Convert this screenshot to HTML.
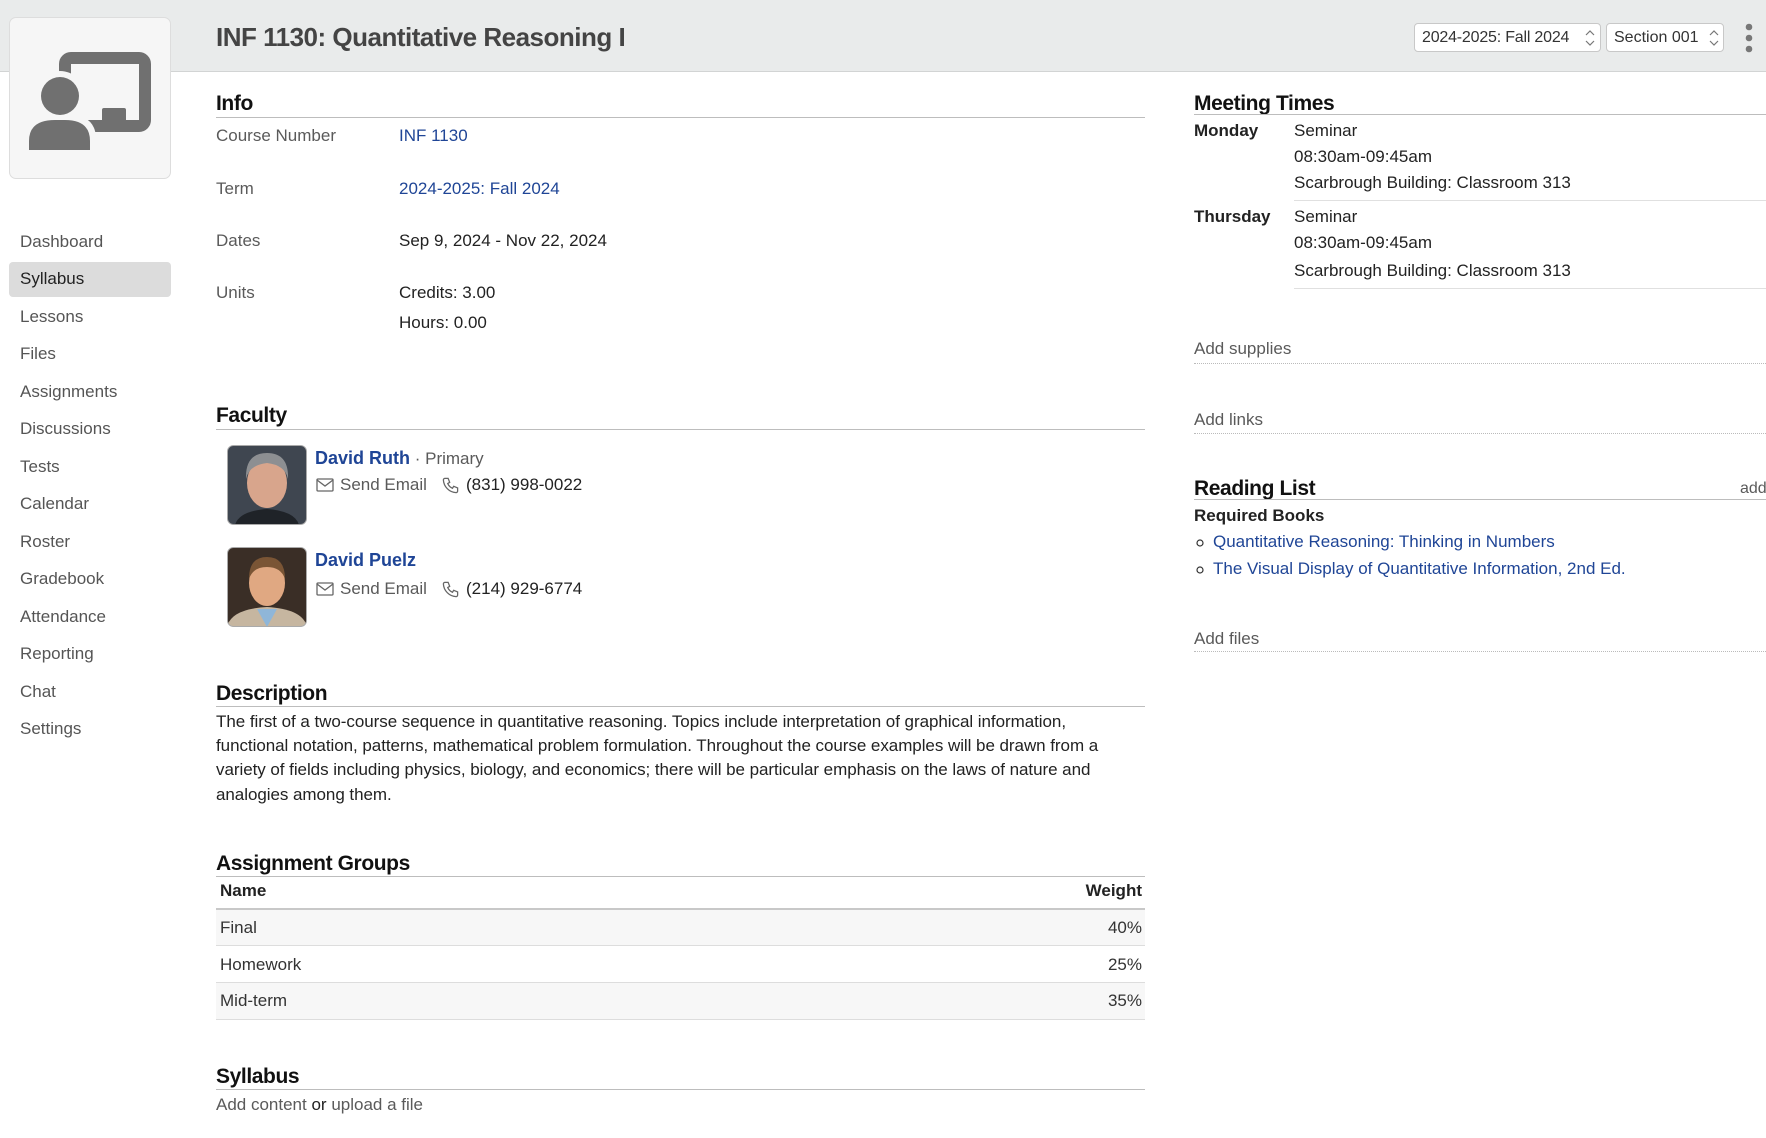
<!DOCTYPE html>
<html><head><meta charset="utf-8"><style>
*{margin:0;padding:0;box-sizing:border-box}
body{width:1766px;height:1138px;position:relative;overflow:hidden;background:#fff;font-family:"Liberation Sans",sans-serif;color:#222;font-size:17px}
.t{position:absolute;white-space:nowrap;line-height:24px;height:24px}
.g{color:#5a5a5a}
.l{color:#1f4596}
.h{position:absolute;white-space:nowrap;font-size:21px;line-height:26px;color:#111;letter-spacing:-0.4px;font-weight:bold}
.ln{position:absolute;height:1px;background:#bdbdbd}
.dl{position:absolute;height:0;border-top:1px dotted #bbb}
.nav{position:absolute;left:20px;color:#555;font-size:17px;line-height:24px;white-space:nowrap}
.b{font-weight:bold}
</style></head><body>
<div style="position:absolute;left:0;top:0;width:1766px;height:72px;background:#e9ebeb;border-bottom:1px solid #d2d4d4"></div>
<div class="t" style="left:216px;top:22px;font-size:26px;line-height:30px;height:30px;color:#444;letter-spacing:-0.5px;font-weight:bold">INF 1130: Quantitative Reasoning I</div>
<div style="position:absolute;left:1414px;top:23px;width:187px;height:29px;background:#fff;border:1px solid #c8c8c8;border-radius:4px;font-size:16px;line-height:27px;padding-left:7px;color:#333;letter-spacing:-0.2px">2024-2025: Fall 2024</div>
<div style="position:absolute;left:1606px;top:23px;width:118px;height:29px;background:#fff;border:1px solid #c8c8c8;border-radius:4px;font-size:16px;line-height:27px;padding-left:7px;color:#333">Section 001</div>
<svg style="position:absolute;left:1584px;top:29px" width="12" height="18"><path d="M2 6l4-4 4 4M2 12l4 4 4-4" fill="none" stroke="#777" stroke-width="1.2"/></svg>
<svg style="position:absolute;left:1708px;top:29px" width="12" height="18"><path d="M2 6l4-4 4 4M2 12l4 4 4-4" fill="none" stroke="#777" stroke-width="1.2"/></svg>
<svg style="position:absolute;left:1742px;top:22px" width="14" height="32"><circle cx="7" cy="5" r="3.3" fill="#777"/><circle cx="7" cy="16" r="3.3" fill="#777"/><circle cx="7" cy="27" r="3.3" fill="#777"/></svg>

<div style="position:absolute;left:9px;top:17px;width:162px;height:162px;background:#f6f6f6;border:1px solid #ddd;border-radius:7px"></div>
<svg style="position:absolute;left:9px;top:17px" width="162" height="162" viewBox="0 0 162 162">
<rect x="56" y="41" width="80" height="68" rx="6" fill="none" stroke="#707070" stroke-width="12"/>
<rect x="93" y="91" width="24" height="14" rx="2" fill="#707070"/>
<circle cx="51" cy="79" r="25" fill="#f6f6f6"/>
<path d="M14 138 V122 Q14 97 46 97 H56 Q87 97 87 122 V138 Z" fill="#f6f6f6"/>
<circle cx="51" cy="79" r="19" fill="#707070"/>
<path d="M20 133 V124 Q20 103 46 103 H56 Q81 103 81 124 V133 Z" fill="#707070"/>
</svg>

<div style="position:absolute;left:9px;top:262px;width:162px;height:35px;background:#dcdcdc;border-radius:4px"></div>
<div class="nav" style="top:230px">Dashboard</div>
<div class="nav" style="top:267px;color:#222">Syllabus</div>
<div class="nav" style="top:305px">Lessons</div>
<div class="nav" style="top:342px">Files</div>
<div class="nav" style="top:380px">Assignments</div>
<div class="nav" style="top:417px">Discussions</div>
<div class="nav" style="top:455px">Tests</div>
<div class="nav" style="top:492px">Calendar</div>
<div class="nav" style="top:530px">Roster</div>
<div class="nav" style="top:567px">Gradebook</div>
<div class="nav" style="top:605px">Attendance</div>
<div class="nav" style="top:642px">Reporting</div>
<div class="nav" style="top:680px">Chat</div>
<div class="nav" style="top:717px">Settings</div>

<!-- Info -->
<div class="h" style="left:216px;top:91px">Info</div>
<div class="ln" style="left:216px;top:117px;width:929px"></div>
<div class="t g" style="left:216px;top:124px">Course Number</div><div class="t l" style="left:399px;top:124px">INF 1130</div>
<div class="t g" style="left:216px;top:177px">Term</div><div class="t l" style="left:399px;top:177px">2024-2025: Fall 2024</div>
<div class="t g" style="left:216px;top:229px">Dates</div><div class="t" style="left:399px;top:229px">Sep 9, 2024 - Nov 22, 2024</div>
<div class="t g" style="left:216px;top:281px">Units</div><div class="t" style="left:399px;top:281px">Credits: 3.00</div>
<div class="t" style="left:399px;top:311px">Hours: 0.00</div>

<!-- Faculty -->
<div class="h" style="left:216px;top:403px">Faculty</div>
<div class="ln" style="left:216px;top:429px;width:929px"></div>
<svg style="position:absolute;left:227px;top:445px" width="80" height="80"><defs><clipPath id="c1"><rect x="0.5" y="0.5" width="79" height="79" rx="6"/></clipPath></defs><g clip-path="url(#c1)"><rect width="80" height="80" fill="#3f4650"/><path d="M8 80 Q12 66 40 64 Q68 66 72 80Z" fill="#1f2328"/><ellipse cx="40" cy="38" rx="20" ry="25" fill="#d8a58c"/><path d="M19 34 Q18 8 40 8 Q62 8 61 34 Q58 20 40 18 Q22 20 19 34Z" fill="#8d8f92"/></g><rect x="0.5" y="0.5" width="79" height="79" rx="6" fill="none" stroke="#aaa"/></svg>
<div class="t" style="left:315px;top:446px"><span class="l b" style="font-size:18px">David Ruth</span><span class="g"> · Primary</span></div>
<svg style="position:absolute;left:316px;top:478px" width="18" height="14"><rect x="1" y="1" width="16" height="12" rx="1" fill="none" stroke="#666" stroke-width="1.3"/><path d="M1 2l8 6 8-6" fill="none" stroke="#666" stroke-width="1.3"/></svg>
<div class="t g" style="left:340px;top:473px">Send Email</div>
<svg style="position:absolute;left:441px;top:476px" width="19" height="19" viewBox="0 0 24 24"><path d="M5 3h4l2 5-2.5 1.5a11 11 0 0 0 6 6L16 13l5 2v4a2 2 0 0 1-2 2A17 17 0 0 1 3 5a2 2 0 0 1 2-2" fill="none" stroke="#666" stroke-width="1.6"/></svg>
<div class="t" style="left:466px;top:473px">(831) 998-0022</div>

<svg style="position:absolute;left:227px;top:547px" width="80" height="80"><defs><clipPath id="c2"><rect x="0.5" y="0.5" width="79" height="79" rx="6"/></clipPath></defs><g clip-path="url(#c2)"><rect width="80" height="80" fill="#3a2e26"/><path d="M0 80 Q4 62 40 60 Q76 62 80 80Z" fill="#c6b6a0"/><path d="M30 62 L40 80 L50 62Z" fill="#8fb6d8"/><ellipse cx="40" cy="36" rx="18" ry="23" fill="#e0a882"/><path d="M22 32 Q22 10 40 10 Q58 10 58 32 Q54 20 40 20 Q26 20 22 32Z" fill="#7a5535"/></g><rect x="0.5" y="0.5" width="79" height="79" rx="6" fill="none" stroke="#aaa"/></svg>
<div class="t" style="left:315px;top:548px"><span class="l b" style="font-size:18px">David Puelz</span></div>
<svg style="position:absolute;left:316px;top:582px" width="18" height="14"><rect x="1" y="1" width="16" height="12" rx="1" fill="none" stroke="#666" stroke-width="1.3"/><path d="M1 2l8 6 8-6" fill="none" stroke="#666" stroke-width="1.3"/></svg>
<div class="t g" style="left:340px;top:577px">Send Email</div>
<svg style="position:absolute;left:441px;top:580px" width="19" height="19" viewBox="0 0 24 24"><path d="M5 3h4l2 5-2.5 1.5a11 11 0 0 0 6 6L16 13l5 2v4a2 2 0 0 1-2 2A17 17 0 0 1 3 5a2 2 0 0 1 2-2" fill="none" stroke="#666" stroke-width="1.6"/></svg>
<div class="t" style="left:466px;top:577px">(214) 929-6774</div>

<!-- Description -->
<div class="h" style="left:216px;top:681px">Description</div>
<div class="ln" style="left:216px;top:706px;width:929px"></div>
<div class="t" style="left:216px;top:710px;font-size:17px;letter-spacing:-0.05px">The first of a two-course sequence in quantitative reasoning. Topics include interpretation of graphical information,</div>
<div class="t" style="left:216px;top:734px;font-size:17px;letter-spacing:-0.05px">functional notation, patterns, mathematical problem formulation. Throughout the course examples will be drawn from a</div>
<div class="t" style="left:216px;top:758px;font-size:17px;letter-spacing:-0.05px">variety of fields including physics, biology, and economics; there will be particular emphasis on the laws of nature and</div>
<div class="t" style="left:216px;top:783px;font-size:17px;letter-spacing:-0.05px">analogies among them.</div>

<!-- Assignment groups -->
<div class="h" style="left:216px;top:851px">Assignment Groups</div>
<div class="ln" style="left:216px;top:876px;width:929px"></div>
<div class="t b" style="left:220px;top:879px">Name</div><div class="t b" style="right:624px;top:879px">Weight</div>
<div style="position:absolute;left:216px;top:908px;width:929px;height:2px;background:#c8c8c8"></div>
<div style="position:absolute;left:216px;top:910px;width:929px;height:36px;background:#f7f7f7;border-bottom:1px solid #ddd"></div>
<div style="position:absolute;left:216px;top:946px;width:929px;height:37px;background:#fff;border-bottom:1px solid #ddd"></div>
<div style="position:absolute;left:216px;top:983px;width:929px;height:37px;background:#f7f7f7;border-bottom:1px solid #ddd"></div>
<div class="t" style="left:220px;top:916px;color:#333">Final</div><div class="t" style="right:624px;top:916px;color:#333">40%</div>
<div class="t" style="left:220px;top:953px;color:#333">Homework</div><div class="t" style="right:624px;top:953px;color:#333">25%</div>
<div class="t" style="left:220px;top:989px;color:#333">Mid-term</div><div class="t" style="right:624px;top:989px;color:#333">35%</div>

<div class="h" style="left:216px;top:1064px">Syllabus</div>
<div class="ln" style="left:216px;top:1089px;width:929px"></div>
<div class="t" style="left:216px;top:1093px"><span class="g">Add content</span> or <span class="g">upload a file</span></div>

<!-- Right column -->
<div class="h" style="left:1194px;top:91px">Meeting Times</div>
<div class="ln" style="left:1194px;top:114px;width:572px"></div>
<div class="t b" style="left:1194px;top:119px">Monday</div>
<div class="t" style="left:1294px;top:119px">Seminar</div>
<div class="t" style="left:1294px;top:145px">08:30am-09:45am</div>
<div class="t" style="left:1294px;top:171px">Scarbrough Building: Classroom 313</div>
<div class="ln" style="left:1294px;top:200px;width:472px;background:#e0e0e0"></div>
<div class="t b" style="left:1194px;top:205px">Thursday</div>
<div class="t" style="left:1294px;top:205px">Seminar</div>
<div class="t" style="left:1294px;top:231px">08:30am-09:45am</div>
<div class="t" style="left:1294px;top:259px">Scarbrough Building: Classroom 313</div>
<div class="ln" style="left:1294px;top:288px;width:472px;background:#e0e0e0"></div>

<div class="t g" style="left:1194px;top:337px">Add supplies</div>
<div class="dl" style="left:1194px;top:363px;width:572px"></div>
<div class="t g" style="left:1194px;top:408px">Add links</div>
<div class="dl" style="left:1194px;top:433px;width:572px"></div>

<div class="h" style="left:1194px;top:476px">Reading List</div>
<div class="t g" style="left:1740px;top:477px;font-size:16px">add</div>
<div class="ln" style="left:1194px;top:499px;width:572px"></div>
<div class="t b" style="left:1194px;top:504px">Required Books</div>
<svg style="position:absolute;left:1195px;top:538px" width="10" height="10"><circle cx="5" cy="5" r="3" fill="none" stroke="#333" stroke-width="1.2"/></svg>
<div class="t l" style="left:1213px;top:530px">Quantitative Reasoning: Thinking in Numbers</div>
<svg style="position:absolute;left:1195px;top:565px" width="10" height="10"><circle cx="5" cy="5" r="3" fill="none" stroke="#333" stroke-width="1.2"/></svg>
<div class="t l" style="left:1213px;top:557px">The Visual Display of Quantitative Information, 2nd Ed.</div>

<div class="t g" style="left:1194px;top:627px">Add files</div>
<div class="dl" style="left:1194px;top:651px;width:572px"></div>
</body></html>
